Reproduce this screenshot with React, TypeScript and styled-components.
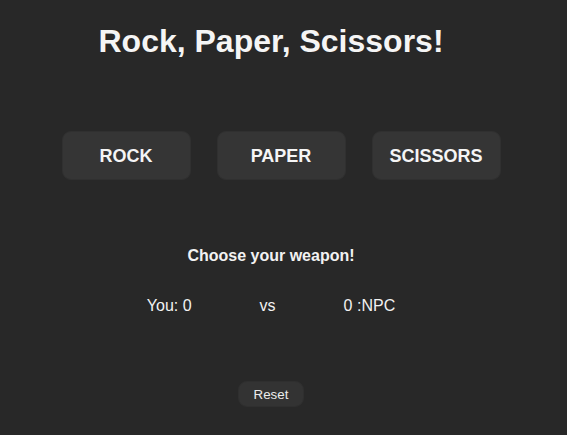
import React, { useState } from "react";
import styled, { createGlobalStyle } from "styled-components";

const Global = createGlobalStyle`
  html, body { margin: 0; padding: 0; background: #282828; }
  body { font-family: "Liberation Sans", Arial, sans-serif; color: #f2f2f2; }
`;

const Page = styled.main`
  width: 542px;
  display: flex;
  flex-direction: column;
  align-items: center;
  padding-top: 23px;
`;

const Title = styled.h1`
  margin: 0;
  font-size: 32px;
  font-weight: 700;
  line-height: 37px;
  color: #f5f5f5;
`;

const Weapons = styled.div`
  display: flex;
  gap: 26px;
  margin-top: 71px;
  padding-left: 20px;
`;

const WeaponButton = styled.button`
  width: 129px;
  height: 49px;
  border-radius: 9px;
  border: 1px solid #303030;
  background: #353535;
  color: #f5f5f5;
  font-family: "Liberation Sans", Arial, sans-serif;
  font-size: 18px;
  font-weight: 700;
  cursor: pointer;
  padding: 2px 0 0;
`;

const Prompt = styled.p`
  margin: 67px 0 0;
  font-size: 16px;
  font-weight: 700;
  line-height: 18px;
  color: #f2f2f2;
`;

const Scores = styled.div`
  display: flex;
  gap: 68px;
  margin-top: 32px;
  font-size: 16px;
  line-height: 18px;
  color: #f2f2f2;
`;

const ResetButton = styled.button`
  margin-top: 66px;
  width: 66px;
  height: 26px;
  border-radius: 9px;
  border: 1px solid #2f2f2f;
  background: #333333;
  color: #ececec;
  font-family: "Liberation Sans", Arial, sans-serif;
  font-size: 13.333px;
  padding: 0;
  cursor: pointer;
`;

export default function App() {
  const [you, setYou] = useState(0);
  const [npc, setNpc] = useState(0);
  const [msg, setMsg] = useState("Choose your weapon!");
  const weapons = ["ROCK", "PAPER", "SCISSORS"];
  const play = (i: number) => {
    const n = Math.floor(Math.random() * 3);
    if (n === i) setMsg("It's a tie!");
    else if ((i + 1) % 3 === n) { setNpc(npc + 1); setMsg("You lose!"); }
    else { setYou(you + 1); setMsg("You win!"); }
  };
  return (
    <>
      <Global />
      <Page>
        <Title>Rock, Paper, Scissors!</Title>
        <Weapons>
          {weapons.map((w, i) => (
            <WeaponButton key={w} onClick={() => play(i)}>{w}</WeaponButton>
          ))}
        </Weapons>
        <Prompt>{msg}</Prompt>
        <Scores>
          <span>You: {you}</span>
          <span>vs</span>
          <span>{npc} :NPC</span>
        </Scores>
        <ResetButton onClick={() => { setYou(0); setNpc(0); setMsg("Choose your weapon!"); }}>Reset</ResetButton>
      </Page>
    </>
  );
}
